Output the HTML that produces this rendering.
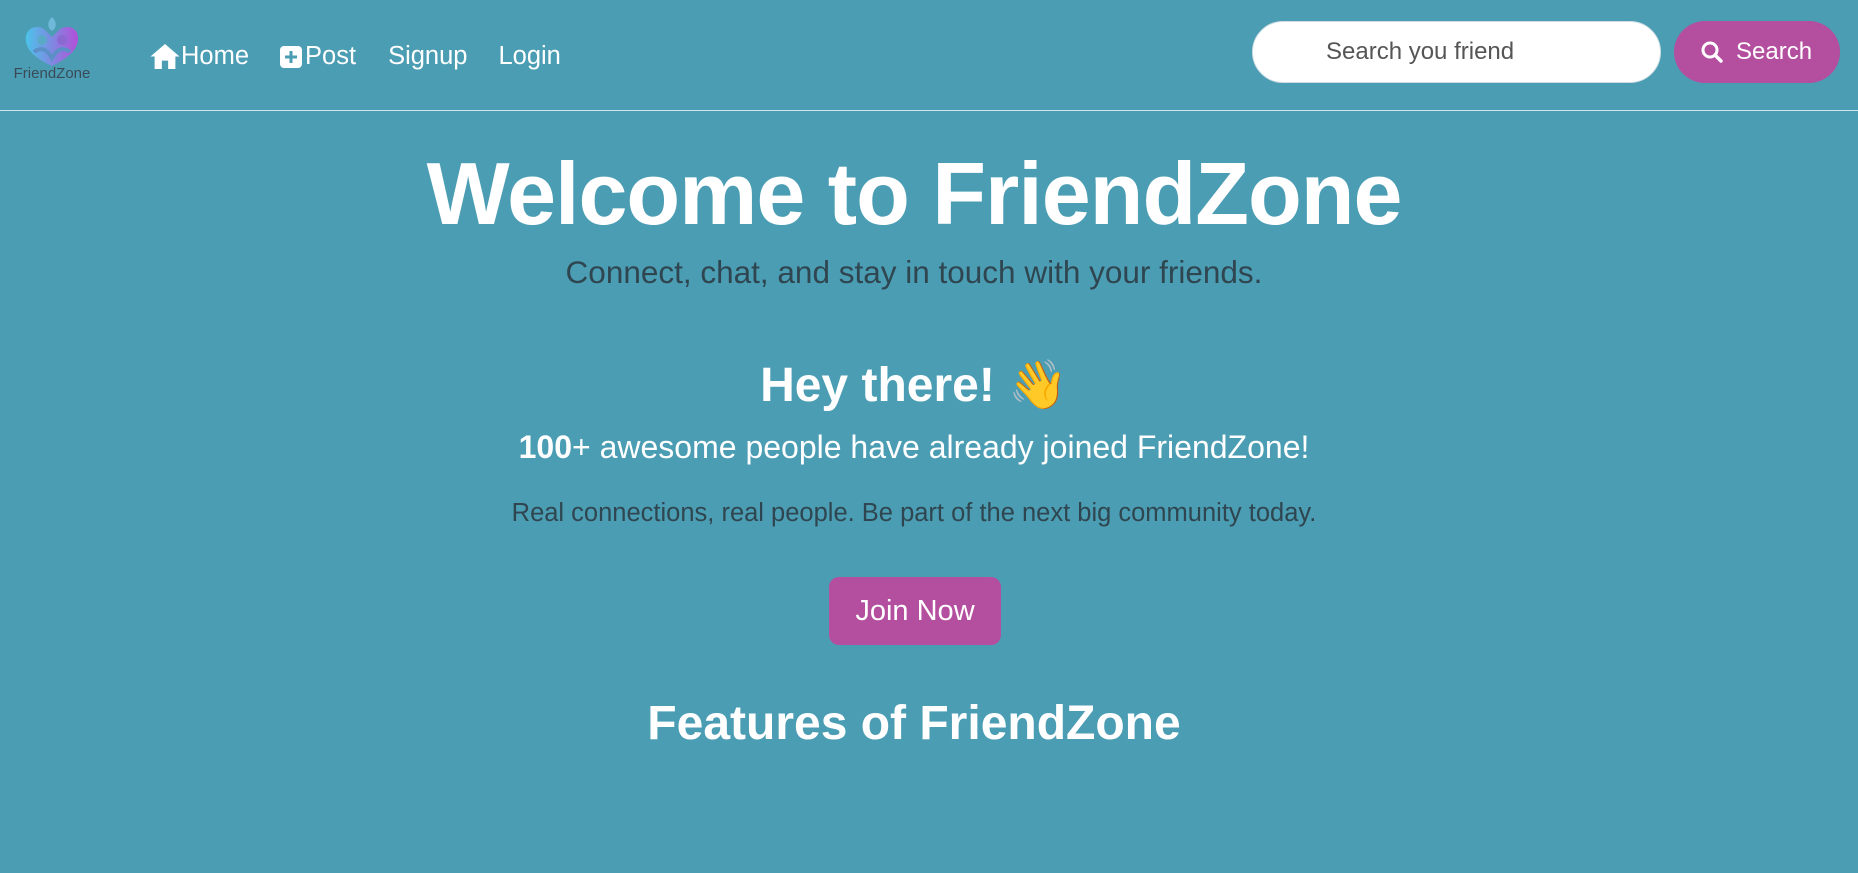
<!DOCTYPE html>
<html><head><meta charset="utf-8"><style>
*{margin:0;padding:0;box-sizing:border-box}
body{width:1858px;height:873px;background:#4b9db4;font-family:"Liberation Sans",sans-serif;overflow:hidden;position:relative;color:#fff}
.nav{position:absolute;left:0;top:0;width:1858px;height:111px;border-bottom:1px solid #cfe6ee}
.logo{position:absolute;left:6px;top:16px;width:92px;height:70px}
.logo .t{position:absolute;left:0;top:49px;width:92px;text-align:center;font-size:15px;color:#3a4a58}
.links{position:absolute;top:42px;left:149px;font-size:25.5px;display:flex;align-items:center}
.links span{display:flex;align-items:center}
.input{position:absolute;left:1252px;top:21px;width:409px;height:62px;background:#fff;border-radius:31px;border:1px solid #cfdde2;color:#555;font-size:24px;line-height:60px;padding-left:73px}
.btn{position:absolute;left:1674px;top:21px;width:166px;height:62px;background:#b44e9e;border-radius:31px;font-size:24px;line-height:62px;padding-left:26px;display:flex;align-items:center}
.c{position:absolute;left:0;width:1828px;text-align:center}
</style></head><body>
<div class="nav">
 <div class="logo">
  <svg width="92" height="52" viewBox="0 0 92 52">
   <defs><linearGradient id="g" x1="0" x2="1"><stop offset="0" stop-color="#4cc3ea"/><stop offset="1" stop-color="#b24fd8"/></linearGradient></defs>
   <path d="M46 50 C28 42 18 32 20 20 C22 10 34 8 40 15 L46 21 L52 15 C58 8 72 10 72 22 C72 34 62 42 46 50Z" fill="url(#g)"/>
   <path d="M46 1 C41 6 41 12 46 15 C51 12 51 6 46 1Z" fill="#6fb8d8"/>
   <circle cx="36" cy="24" r="5" fill="#5aa9c6"/><circle cx="56" cy="24" r="5" fill="#8a6ad0"/>
   <path d="M28 36 Q38 28 46 42 Q54 28 64 36" stroke="#5b8fc8" stroke-width="4" fill="none"/>
  </svg>
  <div class="t">FriendZone</div>
 </div>
 <div class="links">
  <span><svg width="32" height="27" viewBox="0 0 30 26"><path d="M15 1 L1 13 H5 V25 H12 V17 H18 V25 H25 V13 H29Z" fill="#fff"/></svg>Home</span>
  <span style="margin-left:31px"><svg width="22" height="22" viewBox="0 0 22 22" style="margin-right:3px"><rect x="0" y="0" width="22" height="22" rx="4" fill="#fff"/><path d="M11 5V17M5 11H17" stroke="#4b9db4" stroke-width="3"/></svg>Post</span>
  <span style="margin-left:32px">Signup</span>
  <span style="margin-left:31px">Login</span>
 </div>
 <div class="input">Search you friend</div>
 <div class="btn"><svg width="24" height="24" viewBox="0 0 24 24" style="margin-right:12px"><circle cx="10" cy="10" r="7" stroke="#fff" stroke-width="3" fill="none"/><path d="M15 15L21 21" stroke="#fff" stroke-width="3.5" stroke-linecap="round"/></svg>Search</div>
</div>
<div class="c" style="top:139px;font-size:88px;font-weight:bold;letter-spacing:-1px;line-height:110px">Welcome to FriendZone</div>
<div class="c" style="top:252px;font-size:31.5px;color:#2f4650;line-height:40px">Connect, chat, and stay in touch with your friends.</div>
<div class="c" style="top:356px;font-size:48px;font-weight:bold;line-height:60px">Hey there! 👋</div>
<div class="c" style="top:427px;font-size:32px;line-height:40px"><b>100</b>+ awesome people have already joined FriendZone!</div>
<div class="c" style="top:498px;font-size:25.5px;color:#2f4650;line-height:30px">Real connections, real people. Be part of the next big community today.</div>
<div style="position:absolute;left:829px;top:577px;width:172px;height:68px;background:#b44e9e;border-radius:10px;font-size:29px;line-height:68px;text-align:center">Join Now</div>
<div class="c" style="top:694px;font-size:48px;font-weight:bold;line-height:60px">Features of FriendZone</div>
</body></html>
